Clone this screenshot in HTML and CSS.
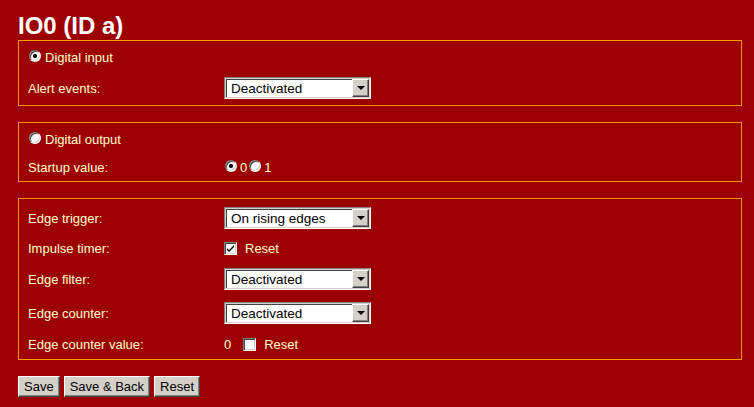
FILE: index.html
```html
<!DOCTYPE html>
<html lang="en">
<head>
    <meta charset="UTF-8">
    <title>IO0 (ID a)</title>
    <link rel="stylesheet" href="styles.css">
</head>
<body>
    <div class="page">
        <h1>IO0 (ID a)</h1>

        <div class="box box-input">
            <div class="row row-text">
                <label class="opt"><input type="radio" name="mode" checked><span>Digital input</span></label>
            </div>
            <div class="row row-select">
                <span class="lbl">Alert events:</span>
                <div class="combo">
                    <select><option>Deactivated</option></select>
                    <span class="combo-btn"><i></i></span>
                </div>
            </div>
        </div>

        <div class="box">
            <div class="row row-text">
                <label class="opt"><input type="radio" name="mode"><span>Digital output</span></label>
            </div>
            <div class="row row-text">
                <span class="lbl">Startup value:</span>
                <div class="val">
                    <label class="opt opt-inline"><input type="radio" name="start" checked><span>0</span></label>
                    <label class="opt opt-inline"><input type="radio" name="start"><span>1</span></label>
                </div>
            </div>
        </div>

        <div class="box box-edge">
            <div class="row row-select">
                <span class="lbl">Edge trigger:</span>
                <div class="combo">
                    <select><option>On rising edges</option></select>
                    <span class="combo-btn"><i></i></span>
                </div>
            </div>
            <div class="row row-check">
                <span class="lbl">Impulse timer:</span>
                <div class="val">
                    <label class="chk"><input type="checkbox" checked><span class="chk-box"><svg width="9" height="9" viewBox="0 0 9 9"><path d="M1 4 L3 6 L8 1 L8 3 L3 8 L1 6 Z" fill="#000"/></svg></span>Reset</label>
                </div>
            </div>
            <div class="row row-select">
                <span class="lbl">Edge filter:</span>
                <div class="combo">
                    <select><option>Deactivated</option></select>
                    <span class="combo-btn"><i></i></span>
                </div>
            </div>
            <div class="row row-select">
                <span class="lbl">Edge counter:</span>
                <div class="combo">
                    <select><option>Deactivated</option></select>
                    <span class="combo-btn"><i></i></span>
                </div>
            </div>
            <div class="row row-last">
                <span class="lbl">Edge counter value:</span>
                <div class="val">
                    <span class="count">0</span>
                    <label class="chk"><input type="checkbox"><span class="chk-box"></span>Reset</label>
                </div>
            </div>
        </div>

        <div class="actions">
            <button class="btn">Save</button>
            <button class="btn">Save &amp; Back</button>
            <button class="btn">Reset</button>
        </div>
    </div>
</body>
</html>
```

FILE: styles.css
```css
html, body {
    margin: 0;
    background: #9c0000;
}
body {
    font-family: "Liberation Sans", Arial, sans-serif;
    font-size: 13px;
    color: #ffffcc;
}
.page {
    width: 724px;
    padding: 0 0 0 18px;
}
h1 {
    margin: 12px 0 1px;
    font-size: 24px;
    line-height: 27px;
    font-weight: bold;
    color: #fff;
}
.box {
    border: 1px solid #ff9900;
    padding: 2px 0 0 9px;
    margin-bottom: 16px;
}
.row {
    display: grid;
    grid-template-columns: 196px 1fr;
    align-items: center;
}
.row-text { height: 28px; }
.row-select { height: 34px; }
.row-check { height: 27px; }
.row-last { height: 29px; }
.val {
    display: flex;
    align-items: center;
}

/* radio buttons, classic look */
.opt {
    display: inline-flex;
    align-items: center;
}
.opt input {
    appearance: none;
    -webkit-appearance: none;
    box-sizing: border-box;
    width: 12px;
    height: 12px;
    margin: -2px 4px 0 1px;
    border-radius: 50%;
    border: 1px solid;
    border-color: #808080 #fff #fff #808080;
    box-shadow: inset 1px 1px #404040, inset -1px -1px #d4d0c8;
    background: #fff;
}
.opt input:checked {
    background: radial-gradient(circle, #000 0 1.8px, #fff 2.3px);
}
.opt-inline input { margin: -2px 3px 0 1px; }
.opt-inline + .opt-inline input { margin-left: 2px; }

/* checkboxes */
.chk {
    display: inline-flex;
    align-items: center;
}
.chk input { display: none; }
.chk-box {
    box-sizing: border-box;
    width: 13px;
    height: 13px;
    margin-right: 8px;
    border: 1px solid;
    border-color: #808080 #fff #fff #808080;
    box-shadow: inset 1px 1px #404040, inset -1px -1px #d4d0c8;
    background: #fff;
    display: flex;
    align-items: center;
    justify-content: center;
}
.count { margin-right: 12px; }

/* select boxes */
.combo {
    box-sizing: border-box;
    display: flex;
    width: 147px;
    height: 22px;
    padding: 1px;
    border: 1px solid;
    border-color: #808080 #fff #fff #808080;
    background: #d4d0c8;
}
.combo select {
    appearance: none;
    -webkit-appearance: none;
    flex: 1;
    min-width: 0;
    height: 18px;
    margin: 0;
    padding: 0 0 0 4px;
    border: 0;
    border-top: 1px solid #404040;
    border-left: 1px solid #404040;
    border-radius: 0;
    background: #fff;
    font-family: "Liberation Sans", Arial, sans-serif;
    font-size: 13.5px;
    color: #000;
    outline: none;
}
.combo-btn {
    box-sizing: border-box;
    width: 17px;
    height: 18px;
    border: 1px solid;
    border-color: #fff #404040 #404040 #fff;
    box-shadow: inset -1px -1px #808080;
    background: #d4d0c8;
    display: flex;
    align-items: center;
    justify-content: center;
}
.combo-btn i {
    width: 0;
    height: 0;
    border-left: 4px solid transparent;
    border-right: 4px solid transparent;
    border-top: 4px solid #000;
}

/* buttons */
.actions {
    display: flex;
    gap: 4px;
}
.btn {
    height: 21px;
    padding: 0 5px;
    border: 1px solid;
    border-color: #fff #404040 #404040 #fff;
    box-shadow: inset -1px -1px #808080;
    background: #d4d0c8;
    font-family: "Liberation Sans", Arial, sans-serif;
    font-size: 13px;
    color: #000;
    border-radius: 0;
}
```
